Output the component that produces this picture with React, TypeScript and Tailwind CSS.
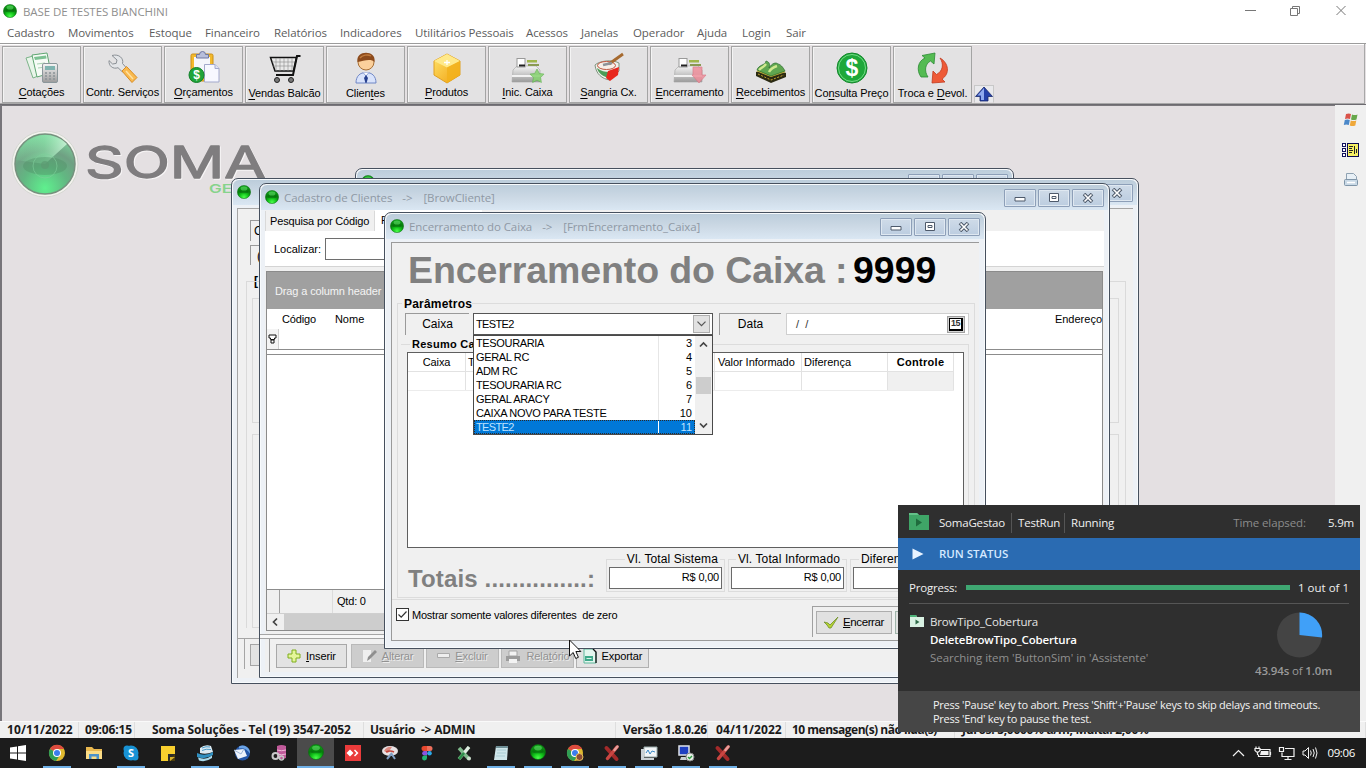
import type { ReactNode } from 'react';

const UI = "font-['Open_Sans','Noto_Sans',sans-serif]";
const ARIAL = "font-['Liberation_Sans',Arial,sans-serif]";

/* ---------- shared drawings ---------- */

function Defs() {
  return (
    <svg className="absolute h-0 w-0" aria-hidden="true">
      <defs>
        <radialGradient id="ball" cx="0.5" cy="0.9" r="0.9">
          <stop offset="0" stopColor="#4dff4d" />
          <stop offset="0.35" stopColor="#12c41a" />
          <stop offset="0.65" stopColor="#067a0c" />
          <stop offset="1" stopColor="#12a81c" />
        </radialGradient>
        <radialGradient id="logoBall" cx="0.5" cy="0.9" r="0.95">
          <stop offset="0" stopColor="#5ff08e" />
          <stop offset="0.4" stopColor="#62b782" />
          <stop offset="0.65" stopColor="#6fa083" />
          <stop offset="1" stopColor="#7fe0a2" />
        </radialGradient>
        <linearGradient id="shine" x1="0" y1="0" x2="1" y2="0">
          <stop offset="0" stopColor="#8df0ae" stopOpacity="0.1" />
          <stop offset="0.55" stopColor="#93efb2" stopOpacity="0.6" />
          <stop offset="1" stopColor="#d6f8e0" />
        </linearGradient>
        <linearGradient id="gold" x1="0" y1="0" x2="1" y2="1">
          <stop offset="0" stopColor="#ffe36a" />
          <stop offset="1" stopColor="#f0a010" />
        </linearGradient>
        <linearGradient id="silver" x1="0" y1="0" x2="0" y2="1">
          <stop offset="0" stopColor="#f6f6f6" />
          <stop offset="1" stopColor="#9b9b9b" />
        </linearGradient>
      </defs>
    </svg>
  );
}

function Ball({ size = 14 }: { size?: number }) {
  return (
    <svg width={size} height={size} viewBox="0 0 14 14" className="shrink-0">
      <circle cx="7" cy="7" r="6.6" fill="url(#ball)" stroke="#0a6b10" strokeWidth="0.5" />
      <ellipse cx="7" cy="3.600" rx="3.400" ry="2" fill="#7dff86" opacity="0.450" />
      <ellipse cx="7" cy="7" rx="4.6" ry="1.2" fill="#04500a" opacity="0.450" />
    </svg>
  );
}

function ToolIcon({ name }: { name: string }) {
  switch (name) {
    case 'cotacoes':
      return (
        <svg width="34" height="32" viewBox="0 0 34 32">
          <path d="M1 6 15 2l6 19-13 5Z" fill="#e9f5ea" stroke="#7db48a" />
          <path d="M7 3 22 1l4 20-14 4Z" fill="#f6fbf6" stroke="#5fa672" />
          <path d="M9 5 21 3.5l.6 3L10 8Z" fill="#7cc192" />
          <path d="M12 12l8-1M13 16l8-1" stroke="#a8d3b2" />
          <rect x="17.5" y="11.5" width="15" height="19" rx="1.5" fill="url(#silver)" stroke="#8b979b" />
          <rect x="20" y="14" width="10" height="4" fill="#7fb4b0" />
          <path d="M20 21h2m2 0h2m2 0h2M20 24h2m2 0h2m2 0h2M20 27h2m2 0h2m2 0h2" stroke="#8b9296" strokeWidth="1.4" />
        </svg>
      );
    case 'servicos':
      return (
        <svg width="32" height="32" viewBox="0 0 32 32">
          <path d="M5 3.5 10 8l-.8 3.4L5.6 12 2 8.6C1.500 14 6 17.500 11 15.700L15.500 20l4-4-4-4.500C17 6.500 12 1.500 5 3.500Z" fill="#e3e5e8" stroke="#8b9096" />
          <path d="m15 19 4.500-4.500L30 25.500 25 30.500Z" fill="#f9b94e" stroke="#d98d25" />
          <path d="m19 19 7 8" stroke="#ffe0a0" strokeWidth="1.500" />
        </svg>
      );
    case 'orcamentos':
      return (
        <svg width="32" height="33" viewBox="0 0 32 33">
          <rect x="3" y="3" width="22" height="27" rx="1.500" fill="#f3b92c" stroke="#c98f17" />
          <rect x="6" y="6" width="16" height="20" fill="#f5f6fb" />
          <path d="M8.500 7V3.500h3a3 3 0 0 1 6 0h3V7Z" fill="#b7bedb" stroke="#6f77a0" />
          <path d="M16.500 13.500H27l4 4V31H16.500Z" fill="#f7f8ff" stroke="#a3a9cc" />
          <path d="M27 13.500v4h4" fill="#dfe3f5" stroke="#a3a9cc" />
          <circle cx="8.500" cy="24" r="7.500" fill="#1fa53a" stroke="#0f7f28" />
          <text x="8.500" y="28.300" textAnchor="middle" fontSize="12" fontWeight="700" fill="#fff">$</text>
        </svg>
      );
    case 'vendas':
      return (
        <svg width="32" height="30" viewBox="0 0 32 30">
          <path d="M1.500 3.500h26l-3 13.500H6Z" fill="#e9e9e9" stroke="#111" strokeWidth="1.500" />
          <path d="M7 4v13M11 4v13M15 4v13M19 4v13M23 4v13M3 8h24M4 12h22" stroke="#8a8a8a" strokeWidth="0.600" />
          <path d="M31.500 2H28l-4 19H7" fill="none" stroke="#111" strokeWidth="2" />
          <circle cx="8" cy="26" r="2.500" fill="#777" stroke="#222" />
          <circle cx="22" cy="26" r="2.500" fill="#777" stroke="#222" />
        </svg>
      );
    case 'clientes':
      return (
        <svg width="24" height="32" viewBox="0 0 24 32">
          <path d="M2 31c0-7 4-10.500 10-10.500S22 24 22 31Z" fill="#d9e3fb" stroke="#6f86c5" />
          <path d="m9 20.500 3 3.500 3-3.500" fill="#fff" stroke="#8ea0d4" />
          <path d="m12 23 2 3-1.500 5h-1L10 26Z" fill="#27408f" />
          <circle cx="12" cy="10" r="8" fill="#fbd09c" stroke="#a86f35" />
          <path d="M3.500 10C2.500 3.500 7 .8 12 .8s9.500 2.700 8.500 9.200C17 6 9 9 3.500 10Z" fill="#8c4a1c" />
          <path d="M6 6c2-3 8-4 11-2" stroke="#c07a3c" strokeWidth="1.400" fill="none" />
        </svg>
      );
    case 'produtos':
      return (
        <svg width="28" height="31" viewBox="0 0 28 31">
          <path d="M14 1 27 8v14L14 30 1 22V8Z" fill="url(#gold)" stroke="#e0a021" />
          <path d="M14 1 27 8 14 14.500 1 8Z" fill="#ffe98a" />
          <path d="M14 14.500 27 8v14L14 30Z" fill="#f3b11c" opacity="0.800" />
          <path d="M14 7v5m-3-2.500h6" stroke="#fff" strokeWidth="1.300" />
        </svg>
      );
    case 'inic':
    case 'encerramento': {
      const red = name === 'encerramento';
      return (
        <svg width="34" height="27" viewBox="0 0 34 27">
          <path d="M2 13 6 9h19l4 4v12H1Z" fill="url(#silver)" stroke="#a3a3a3" strokeWidth="0.600" />
          <path d="M1 18h28v2H1Z" fill="#fff" opacity="0.800" />
          <rect x="6" y="1.500" width="8" height="8.500" fill="#fff" stroke="#999" />
          <path d="M8 8.500h6" stroke="#222" strokeWidth="2" />
          <rect x="16" y="3" width="10" height="2.500" fill="#9fb64a" />
          <rect x="17" y="7" width="11" height="2" fill="#8a9a52" />
          {red ? (
            <path d="M20 10h9v8h4l-7 8-7-8h1Z" fill="#ee8f9b" stroke="#d9707f" strokeWidth="0.700" opacity="0.850" />
          ) : (
            <path d="m26 12 2.300 4.500 4.700.6-3.400 3.400.8 5-4.400-2.300-4.400 2.300.8-5-3.400-3.400 4.700-.6Z" fill="#86d36f" stroke="#5cb04a" strokeWidth="0.700" opacity="0.850" />
          )}
        </svg>
      );
    }
    case 'sangria':
      return (
        <svg width="30" height="32" viewBox="0 0 30 32">
          <path d="M1 13c4-4 17-6 24-2v8l-9 9C8 27 2 22 1 13Z" fill="#eef0ea" stroke="#7f937f" />
          <path d="M3 16c4 3 8 4 12 4l1 6C9 25 4 21 3 16Z" fill="#4c9c57" />
          <path d="m14 19 11-4-1 8-8 6-4-3Z" fill="#e8261c" />
          <ellipse cx="12.500" cy="13.500" rx="9" ry="4" fill="#f7efe8" stroke="#c0563f" />
          <path d="M15 12 29 2" stroke="#a66a2f" strokeWidth="2.800" />
          <path d="m9 13 9-2" stroke="#8d9398" strokeWidth="2.600" />
        </svg>
      );
    case 'recebimentos':
      return (
        <svg width="32" height="26" viewBox="0 0 32 26">
          <path d="m1 14 14-4 16 5v4l-15 6L1 18Z" fill="#2b2a12" />
          <path d="m1 13 15 6 15-5-14-6Z" fill="#c9b53a" />
          <path d="M2 12c2-6 8-4 9-9 4 1 4 4 3 7 3-5 7-6 9-4 2 0 5 3 7 7l-14 5Z" fill="#5fa650" stroke="#2a6a2e" strokeWidth="0.700" />
          <path d="M4 12c3-3 5-3 7-6M14 14c2-4 5-5 8-6" stroke="#cfe88e" strokeWidth="2.400" fill="none" />
          <path d="m3 16 13 6 13-5" stroke="#c9a52e" strokeDasharray="2 1.500" fill="none" />
        </svg>
      );
    case 'consulta':
      return (
        <svg width="32" height="32" viewBox="0 0 32 32">
          <circle cx="16" cy="16" r="15" fill="#1ea83a" stroke="#12862a" />
          <circle cx="16" cy="16" r="13.500" fill="none" stroke="#7be08d" strokeWidth="0.900" />
          <text x="16" y="24" textAnchor="middle" fontSize="23" fontWeight="700" fill="#fff">$</text>
        </svg>
      );
    default:
      return (
        <svg width="32" height="32" viewBox="0 0 32 32">
          <path d="M4 25C-1 18 1 9 8 6L5 3.500 18 1l-1 11-3.500-3C8 12 7 19 11 25Z" fill="#54bb52" stroke="#2c8a35" strokeWidth="0.800" />
          <path d="M23 6c9 5 10 16 2 21l3 3-13 1 1-12 3.500 3.500C26 19 27 12 23 6Z" fill="#ee5a37" stroke="#c23a1e" strokeWidth="0.800" />
        </svg>
      );
  }
}

/* ---------- application chrome ---------- */

const MENU: [string, string][] = [
  ['Cadastro', 'w-[61px]'],
  ['Movimentos', 'w-[81px]'],
  ['Estoque', 'w-[56px]'],
  ['Financeiro', 'w-[69px]'],
  ['Relatórios', 'w-[66px]'],
  ['Indicadores', 'w-[75px]'],
  ['Utilitários Pessoais', 'w-[111px]'],
  ['Acessos', 'w-[55px]'],
  ['Janelas', 'w-[52px]'],
  ['Operador', 'w-[64px]'],
  ['Ajuda', 'w-[45px]'],
  ['Login', 'w-[44px]'],
  ['Sair', 'w-[40px]'],
];

const TOOLS: [string, string, string, string, boolean][] = [
  ['cotacoes', '', 'C', 'otações', false],
  ['servicos', 'Contr. Serviços', '', '', false],
  ['orcamentos', '', 'O', 'rçamentos', false],
  ['vendas', '', 'V', 'endas Balcão', true],
  ['clientes', 'Clien', 't', 'es', true],
  ['produtos', '', 'P', 'rodutos', false],
  ['inic', '', 'I', 'nic. Caixa', false],
  ['sangria', '', 'S', 'angria Cx.', false],
  ['encerramento', '', 'E', 'ncerramento', false],
  ['recebimentos', '', 'R', 'ecebimentos', false],
  ['consulta', 'Co', 'n', 'sulta Preço', true],
  ['troca', 'Troca e ', 'D', 'evol.', true],
];

function TitleBar() {
  return (
    <header className={`flex h-[22px] items-center bg-white pl-[3px] ${UI}`}>
      <Ball size={14} />
      <span className="ml-[6px] pt-px text-[11.5px] tracking-[-0.07px] whitespace-nowrap text-[#8f8f8f]">BASE DE TESTES BIANCHINI</span>
      <div className="ml-auto flex items-center pr-[18px]">
        <svg width="104" height="14" viewBox="0 0 104 14" fill="none" stroke="#777" strokeWidth="1">
          <path d="M1 6.500h11M46.500 4.500h7v7h-7ZM48.500 4.500v-2h7v7h-2M92.500 2l9 9M101.500 2l-9 9" />
        </svg>
      </div>
    </header>
  );
}

function MenuBar() {
  return (
    <nav className={`flex h-[21px] items-center bg-white pl-[7px] text-[11.5px] tracking-[-0.1px] text-[#5c5c5c] ${UI}`}>
      {MENU.map(([label, w]) => (
        <span key={label} className={`${w} shrink-0 whitespace-nowrap`}>{label}</span>
      ))}
    </nav>
  );
}

function Toolbar() {
  return (
    <div className={`flex h-[62px] border-t border-b border-t-[#9c9c9c] border-b-[#6c6a70] bg-[#e4e0e2] ${ARIAL}`}>
      <div className="mr-px flex h-[60px] flex-1 gap-[2px] border-r border-b border-r-[#a8a8a8] border-b-[#a8a8a8] pt-[2px] pl-[2px] shadow-[inset_0_1px_0_#fff]">
        {TOOLS.map(([icon, a, u, b, low]) => (
          <button key={icon} className="flex h-[57px] w-[79px] shrink-0 flex-col items-center border border-[#a4a4a4] bg-[#e3e2e3] shadow-[inset_1px_1px_0_#f4f4f4]">
            <span className="flex h-[39px] items-end justify-center"><span className="block pb-[2px]"><ToolIcon name={icon} /></span></span>
            <span className={`${low ? 'pt-px' : ''} text-[11px] leading-[13px] tracking-[-0.1px] whitespace-nowrap text-black`}>
              {a}<span className="underline underline-offset-[1.500px]">{u}</span>{b}
            </span>
          </button>
        ))}
        <div className="flex h-[18px] w-[20px] items-center justify-center self-end border border-t-[#c8c8c8] border-r-[#c8c8c8] border-b-[#e4e0e2] border-l-[#c8c8c8] bg-[#e9e9ec]">
          <svg width="18" height="16" viewBox="0 0 18 16">
            <path d="M9 1 17.500 10.500H13V15H5v-4.500H.5Z" fill="#2440a8" stroke="#1a2a6c" strokeWidth="0.800" />
            <path d="M9 2v12H6V9.500H2.500Z" fill="#8fa9ee" />
          </svg>
        </div>
      </div>
    </div>
  );
}

function SideBar() {
  return (
    <aside className="flex w-[31px] shrink-0 flex-col items-center gap-[14px] bg-[#f0f0f0] pt-[7px]">
      <svg width="16" height="16" viewBox="0 0 16 16">
        <path d="M3 2q3-1 5 0L7 7Q4.500 6 2 7Z" fill="#d9534a" />
        <path d="M9 2.500q3 1 5.500 0l-1 5q-3 1-5.500 0Z" fill="#67a84c" />
        <path d="M1.800 8q2.500-1 5 0l-1 5q-2.500-1-5 0Z" fill="#4b88c9" />
        <path d="M7.800 8.500q2.500 1 5.500 0l-1 5q-3 1-5.500 0Z" fill="#efa83a" />
      </svg>
      <svg width="17" height="16" viewBox="0 0 17 16" shapeRendering="crispEdges">
        <path d="M.5 1.500h3v3h-3ZM.5 6.500h3v3h-3ZM.5 11.500h3v3h-3Z" fill="#fff" stroke="#11115c" />
        <rect x="5.500" y="1.500" width="11" height="13" fill="#f5ef63" stroke="#0b0b50" />
        <path d="M7 4.500h4M7 6.500h3M7 8.500h4M7 10.500h3M12.500 4v8M14.500 7v4" stroke="#222" />
      </svg>
      <svg width="16" height="16" viewBox="0 0 16 16">
        <path d="M3.500 1.500h7l3 3v9h-10Z" fill="#e8f0f6" stroke="#8fa2b2" />
        <rect x="1.500" y="7.500" width="13" height="6" rx="1" fill="#c9d9e6" stroke="#7f95a8" />
        <path d="M4 10.500h8" stroke="#fff" strokeWidth="1.500" />
      </svg>
    </aside>
  );
}

function SomaLogo() {
  return (
    <svg width="270" height="80" viewBox="0 0 270 80" className="mt-[21px] ml-[10px]">
      <circle cx="35" cy="37" r="33" fill="#f3f3ee" stroke="#d5d8d2" />
      <circle cx="35" cy="37" r="30" fill="url(#logoBall)" stroke="#76917e" strokeWidth="1.500" />
      <path d="M35 37 57 17A30 30 0 0 0 6 33Z" fill="url(#shine)" opacity="0.800" />
      <ellipse cx="35" cy="39" rx="22" ry="9" fill="#4e8762" opacity="0.350" />
      <circle cx="35" cy="39" r="12" fill="none" stroke="#7fcf9b" opacity="0.600" />
      <circle cx="35" cy="38" r="4" fill="#5d9a72" opacity="0.700" />
      <text x="75" y="51" textLength="181" lengthAdjust="spacingAndGlyphs" fontSize="44" fontFamily="Inter, 'Liberation Sans', sans-serif" fontWeight="400" fill="#7f7d7f" stroke="#7f7d7f" strokeWidth="1.300" strokeLinejoin="round" className="drop-shadow-[1px_1px_0_#f7f5f6]">SOMA</text>
      <text x="199" y="66" textLength="23" lengthAdjust="spacingAndGlyphs" fontSize="12" fontFamily="Inter, 'Liberation Sans', sans-serif" fontWeight="600" fill="#86d38b">GE</text>
    </svg>
  );
}

/* ---------- MDI windows ---------- */

function CaptionButtons() {
  const box = 'flex h-[18px] w-[32px] items-center justify-center rounded-[1px] border border-[#8d9fb8] bg-gradient-to-b from-[#cfdbe8] to-[#bccde0] shadow-[inset_0_0_0_1px_#dfe8f1]';
  return (
    <div className="flex gap-[2px]">
      <span className={box}>
        <svg width="12" height="8" viewBox="0 0 12 8"><path d="M1 3.500h10v3.500H1Z" fill="#fff" stroke="#4e5a6b" /></svg>
      </span>
      <span className={box}>
        <svg width="12" height="10" viewBox="0 0 12 10"><path d="M1.500.5h9v8h-9Z" fill="#fff" stroke="#4e5a6b" /><path d="M4 3.500h4v2H4Z" fill="#fff" stroke="#4e5a6b" /></svg>
      </span>
      <span className={box}>
        <svg width="12" height="10" viewBox="0 0 12 10"><path d="m2 1 8 8M10 1 2 9" stroke="#4e5a6b" strokeWidth="3.600" /><path d="m2.500 1.500 7 7M9.500 1.500l-7 7" stroke="#fff" strokeWidth="1.600" /></svg>
      </span>
    </div>
  );
}

function MdiWindow({ place, title, target, children }: { place: string; title?: string; target?: string; children?: ReactNode }) {
  return (
    <section className={`absolute flex flex-col rounded-t-[7px] border border-[#46505e] bg-[#edf1f6] px-[5px] pb-[5px] shadow-[inset_0_0_0_1px_#f7fafc] ${place}`}>
      <div className="-mx-[4px] mt-px flex h-[25px] shrink-0 items-start rounded-t-[6px] bg-gradient-to-b from-[#bccddb] via-[#ccd9e5] to-[#dae7f3] pr-[4px] pl-[4px]">
        <div className="flex pt-[5px]"><Ball size={14} /></div>
        {title && (
          <span className={`ml-[5px] pt-[5px] text-[11.500px] leading-[16px] tracking-[-0.100px] whitespace-pre text-[#8f99a5] ${UI}`}>
            {title}<span className="ml-[10px]">-&gt;</span><span className="ml-[11px]">{target}</span>
          </span>
        )}
        <div className="ml-auto pt-[4px]"><CaptionButtons /></div>
      </div>
      {children}
    </section>
  );
}

function ClientesWindow() {
  const btn = 'flex h-[24px] items-center justify-center gap-[5px] border text-[11px] tracking-[-0.100px] whitespace-nowrap';
  const off = 'border-[#b9b9b9] bg-[#cdcdcd] text-[#929292] [text-shadow:1px_1px_0_#ececec]';
  return (
    <MdiWindow place="top-[78px] left-[259px] h-[495px] w-[851px]" title="Cadastro de Clientes" target="[BrowCliente]">
      <div className={`flex min-h-0 flex-1 flex-col bg-[#f0f0f0] text-[11px] text-black ${ARIAL}`}>
        <div className="flex h-[21px] items-end">
          <span className="flex h-[20px] w-[110px] items-center border-x border-[#d9d9d9] bg-[#f0f0f0] pl-[4px] tracking-[-0.15px] whitespace-nowrap">Pesquisa por Código</span>
          <span className="flex h-[21px] w-[107px] items-center bg-white pl-[6px]">P</span>
        </div>
        <div className="flex h-[36px] items-center border-b border-[#d4d4d4] bg-white pt-px pl-[9px]">
          <span className="w-[51px]">Localizar:</span>
          <span className="h-[22px] w-[300px] border border-[#6e6e6e] bg-white" />
        </div>
        <div className="mt-[4px] mr-px ml-px flex h-[360px] flex-col border border-[#8b8b8b] bg-white">
          <div className="flex h-[37px] items-center bg-[#a0a0a0] pt-px pl-[8px] tracking-[-0.130px] text-[#f4f4f4]">Drag a column header</div>
          <div className="flex h-[20px] items-center pt-px">
            <span className="w-[15px]" />
            <span className="w-[53px] tracking-[-0.150px]">Código</span>
            <span className="w-[721px]">Nome</span>
            <span>Endereço</span>
          </div>
          <div className="flex h-[21px] border-b border-[#8c8c8c]">
            <span className="flex w-[12px] items-center justify-center border-r border-[#d0d0d0] bg-[#f4f4f4]">
              <svg width="9" height="10" viewBox="0 0 9 10"><path d="M1 1h7v3H6.500v1.500h-4V4H1ZM3 6h3v3H3Z" fill="#fff" stroke="#111" /></svg>
            </span>
          </div>
          <div className="h-[5px] border-b border-[#8c8c8c]" />
          <div className="flex-1" />
          <div className="flex h-[24px] items-center border-t border-[#8c8c8c] bg-[#f0f0f0]">
            <span className="h-full w-[13px] border-r border-[#a0a0a0]" />
            <span className="ml-[52px] flex h-full w-[60px] items-center border-l border-[#dcdcdc] pl-[4px] tracking-[-0.200px]">Qtd: 0</span>
          </div>
          <div className="flex h-[17px] items-center border-t border-[#cfcfcf] bg-[#f0f0f0]">
            <svg width="17" height="12" viewBox="0 0 17 12"><path d="M10 2.500 6.500 6l3.500 3.500" fill="none" stroke="#444" strokeWidth="1.700" /></svg>
            <span className="h-full w-[500px] bg-[#cdcdcd]" />
          </div>
        </div>
        <div className="mx-[-5px] mt-[3px] h-[5px] border-y border-[#a5a5a5] bg-[#f7f7f7]" />
        <div className="ml-[4px] flex flex-1 items-start gap-[2px] border-l border-[#9a9a9a] pt-[5px] pl-[6px]">
          <span className={`${btn} mr-[2px] w-[71px] border-[#a8a8a8] bg-[#e3e3e3]`}>
            <svg width="14" height="14" viewBox="0 0 14 14"><path d="M5 1h4v4h4v4H9v4H5V9H1V5h4Z" fill="#e4f59a" stroke="#7fae1d" /></svg>
            <span><u>I</u>nserir</span>
          </span>
          <span className={`${btn} ${off} w-[73px]`}>
            <svg width="15" height="14" viewBox="0 0 15 14"><path d="M1 1h8v12H1Z" fill="#efefef" /><path d="m5 12 1-4 7-7 2 2-7 7Z" fill="#8f8f8f" /></svg>
            <span><u>A</u>lterar</span>
          </span>
          <span className={`${btn} ${off} w-[73px]`}>
            <svg width="13" height="6" viewBox="0 0 13 6"><path d="M.500.500h12v4H.500Z" fill="#eee" stroke="#aaa" /></svg>
            <span><u>E</u>xcluir</span>
          </span>
          <span className={`${btn} ${off} w-[73px]`}>
            <svg width="16" height="13" viewBox="0 0 16 13"><path d="M4 1h8v5H4Z" fill="#f3f3f3" stroke="#a5a5a5" /><path d="M1 6h14v5H1Z" fill="#9c9c9c" /><path d="M4 9h8v4H4Z" fill="#f3f3f3" /></svg>
            <span>Rela<u>t</u>ório</span>
          </span>
          <span className={`${btn} w-[73px] border-[#b0b0b0] bg-[#e3e3e3]`}>
            <svg width="14" height="16" viewBox="0 0 14 16"><path d="M1 1h9l3 3v11H1Z" fill="#e3f6ee" stroke="#5fb79b" /><path d="M2 8h8v5H2Z" fill="#3fa98a" /><path d="M3.500 10.500h5" stroke="#d8f3e8" /><path d="m10 1 3 3v11" fill="none" stroke="#111" strokeWidth="1.300" /></svg>
            <span>Exportar</span>
          </span>
        </div>
      </div>
    </MdiWindow>
  );
}

function BackWindow() {
  return (
    <MdiWindow place="top-[73px] left-[231px] h-[506px] w-[908px]">
      <div className={`mt-[3px] flex min-h-0 flex-1 flex-col border-t border-l border-[#a5a5a5] bg-[#f0f0f0] text-[12px] ${ARIAL}`}>
        <div className="mt-[11px] ml-[12px] h-[21px] w-[60px] border-t border-l border-[#9a9a9a] pl-[3px] leading-[20px]">C</div>
        <div className="mt-[4px] ml-[12px] h-[20px] w-[60px] border-t border-l border-[#9a9a9a] pl-[6px] leading-[20px]">(</div>
        <div className="mr-[7px] ml-[8px] mt-[7px] flex h-[356px] flex-col">
          <div className="flex items-center text-[12px] leading-[18px] font-bold"><span className="pl-[8px]">[</span></div>
          <div className="-mt-[9px] flex flex-1 flex-col gap-[11px] border-t border-r border-l border-[#dadada] pt-[16px] pr-[6px] pl-[5px]">
            <div className="h-[125px] shrink-0 border border-[#dadada]" />
            <div className="flex-1 border border-[#dadada]" />
          </div>
        </div>
        <div className="mt-[10px] border-t border-[#a5a5a5] pl-[6px]">
          <div className="h-[30px] border-l border-[#a5a5a5] p-[5px]"><div className="h-[22px] w-[60px] border border-[#a5a5a5] bg-[#e3e3e3]" /></div>
        </div>
      </div>
    </MdiWindow>
  );
}

const CAIXAS: [string, string][] = [
  ['TESOURARIA', '3'],
  ['GERAL RC', '4'],
  ['ADM RC', '5'],
  ['TESOURARIA RC', '6'],
  ['GERAL ARACY', '7'],
  ['CAIXA NOVO PARA TESTE', '10'],
  ['TESTE2', '11'],
];

function CaixaDropdown() {
  return (
    <div className={`absolute top-[122px] left-[88px] z-10 flex h-[100px] w-[240px] border border-[#4a4a4a] bg-white text-[11px] text-black ${ARIAL}`}>
      <ul className="flex-1">
        {CAIXAS.map(([name, n]) => {
          const on = name === 'TESTE2';
          return (
            <li key={name} className={`flex h-[14px] items-center leading-[14px] ${on ? 'bg-[#0078d7] tracking-[-0.650px] text-[#bfe2ff] outline outline-dotted -outline-offset-1 outline-[#2b2b2b]' : 'tracking-[-0.350px]'}`}>
              <span className={`h-full w-[185px] border-r pl-[2px] whitespace-nowrap ${on ? 'border-white' : 'border-[#e6e6e6]'}`}>{name}</span>
              <span className="flex-1 pr-[3px] text-right tracking-normal">{n}</span>
            </li>
          );
        })}
      </ul>
      <div className="flex w-[17px] flex-col items-center justify-between bg-[#f0f0f0] py-[4px]">
        <svg width="9" height="9" viewBox="0 0 9 9"><path d="m1 6.500 3.500-3.500L8 6.500" fill="none" stroke="#444" strokeWidth="1.700" /></svg>
        <span className="mt-[14px] h-[17px] w-[15px] bg-[#cdcdcd]" />
        <svg width="9" height="9" viewBox="0 0 9 9" className="mt-[14px]"><path d="m1 2.500 3.500 3.500L8 2.500" fill="none" stroke="#444" strokeWidth="1.700" /></svg>
      </div>
    </div>
  );
}

function TotalBox({ label, value, at }: { label: string; value: string; at: string }) {
  return (
    <div className="relative h-[33px] w-[119px] shrink-0 border border-[#dcdcdc] px-[2px] pt-[7px]">
      <span className={`absolute -top-[8px] bg-[#f0f0f0] px-[2px] text-[12px] leading-[15px] tracking-[0.120px] whitespace-nowrap ${at}`}>{label}</span>
      <div className="flex h-[22px] items-center justify-end border border-[#6a6a6a] bg-white pr-[2px] pb-px text-[11px] tracking-[-0.200px]">{value}</div>
    </div>
  );
}

function EncerramentoWindow() {
  const cell = 'flex h-full items-center border-r border-[#e2e2e2] whitespace-nowrap';
  const legend = 'absolute bg-[#f0f0f0] font-bold whitespace-nowrap';
  return (
    <MdiWindow place="top-[107px] left-[384px] h-[437px] w-[602px]" title="Encerramento do Caixa" target="[FrmEncerramento_Caixa]">
      <div className={`relative mt-[3px] mr-px mb-[2px] ml-px flex min-h-0 flex-1 flex-col border-t border-b border-l border-[#9a9a9a] bg-[#f0f0f0] text-[12px] text-black ${ARIAL}`}>
        <h1 className="flex h-[60px] items-start pt-[6px] pl-[16px] text-[37.500px] leading-[42px] font-bold whitespace-pre text-[#808080]">
          <span className="w-[445px] tracking-[-0.100px]">Encerramento do Caixa :</span>
          <span className="text-black">9999</span>
        </h1>
        <div className="relative ml-[5px] flex h-[295px] w-[578px] flex-col border border-[#dcdcdc] pt-[9px] pl-[7px]">
          <span className={`${legend} -top-[7px] left-[4px] pl-[2px] text-[12px] leading-[15px] tracking-[0.200px]`}>Parâmetros</span>
          <div className="flex h-[22px]">
            <span className="mr-[4px] flex w-[64px] items-center justify-center border-t border-l border-[#9a9a9a] pb-[2px]">Caixa</span>
            <span className="mr-[6px] flex w-[240px] items-center justify-between border border-[#555] bg-white pr-[2px] pl-[2px] text-[11px] tracking-[-0.650px]">
              TESTE2
              <span className="flex h-[18px] w-[17px] items-center justify-center border border-[#adadad] bg-[#e1e1e1]">
                <svg width="9" height="6" viewBox="0 0 9 6"><path d="m.500.700 4 4 4-4" fill="none" stroke="#555" strokeWidth="1.200" /></svg>
              </span>
            </span>
            <span className="mr-[5px] flex w-[62px] items-center justify-center border-t border-l border-[#9a9a9a] pb-[2px]">Data</span>
            <span className="flex w-[183px] items-center border border-[#cfcfcf] bg-white pr-[3px] pl-[9px] text-[11px] whitespace-pre text-[#333]">
              /  /
              <span className="ml-auto flex h-[17px] w-[18px] items-center justify-center border border-[#a0a0a0] bg-[#d6d6d6]">
                <span className="flex h-[13px] w-[14px] items-center justify-center border border-r-2 border-b-2 border-black bg-white text-[9px] leading-none font-bold tracking-[-0.500px]">15</span>
              </span>
            </span>
          </div>
          <div className="relative -ml-[4px] mt-[9px] h-[210px] w-[568px] border-t border-r border-[#dcdcdc] pt-[7px] pl-[6px]">
            <span className={`${legend} -top-[8px] left-[9px] pl-[2px] text-[11px] leading-[15px] tracking-[0.250px]`}>Resumo Ca</span>
            <div className="flex h-[196px] w-[557px] flex-col border border-[#5f5f5f] bg-white text-[11px]">
              <div className="flex h-[19px] w-[546px] border-b border-[#e2e2e2]">
                <span className={`${cell} w-[58px] justify-center tracking-[-0.100px]`}>Caixa</span>
                <span className={`${cell} w-[249px] pl-[2px]`}>T</span>
                <span className={`${cell} w-[87px] pl-[3px] tracking-[-0.050px]`}>Valor Informado</span>
                <span className={`${cell} w-[86px] pl-[2px]`}>Diferença</span>
                <span className={`${cell} flex-1 justify-center font-bold tracking-[0.300px]`}>Controle</span>
              </div>
              <div className="flex h-[19px] w-[546px] border-b border-[#ececec]">
                <span className={`${cell} w-[58px]`} />
                <span className={`${cell} w-[249px]`} />
                <span className={`${cell} w-[87px]`} />
                <span className={`${cell} w-[86px]`} />
                <span className={`${cell} flex-1 bg-[#f0f0f0]`} />
              </div>
            </div>
          </div>
          <div className="-mt-px flex">
            <span className="w-[201px] pt-[12px] pl-[3px] text-[24px] leading-[28px] font-bold tracking-[0.150px] whitespace-nowrap text-[#808080]">Totais ...............:</span>
            <div className="flex gap-[3px] pt-[6px]">
              <TotalBox label="Vl. Total Sistema" value="R$ 0,00" at="right-[4px]" />
              <TotalBox label="Vl. Total Informado" value="R$ 0,00" at="right-[4px]" />
              <TotalBox label="Diferença" value="" at="left-[8px]" />
            </div>
          </div>
        </div>
        <div className="mt-[1px] flex flex-1 items-start border-t border-[#dcdcdc] pl-[4px] text-[11px]">
          <span className="mt-[8px] flex h-[13px] w-[13px] items-center justify-center border border-[#333] bg-white">
            <svg width="11" height="9" viewBox="0 0 11 9"><path d="m1.500 4.500 2.700 2.700L9.500 1.500" fill="none" stroke="#333" strokeWidth="1.200" /></svg>
          </span>
          <span className="ml-[3px] mt-[7px] w-[400px] leading-[16px] tracking-[-0.230px] whitespace-pre">Mostrar somente valores diferentes  de zero</span>
          <span className="mt-[6px] flex h-[31px] flex-1 gap-[3px] border-t border-l border-[#a0a0a0] pt-[4px] pl-[3px]">
            <span className="flex h-[23px] w-[76px] items-center justify-center gap-[3px] border border-[#adadad] bg-[#e1e1e1] pr-px whitespace-nowrap">
              <svg width="17" height="13" viewBox="0 0 17 13"><path d="m1 6 4 1 2 2 8-8-7 11H6L4 9Z" fill="#b6d334" stroke="#6f8f2a" strokeWidth="0.800" /></svg>
              <span className="text-[11.500px] tracking-[-0.400px]"><u>E</u>ncerrar</span>
            </span>
            <span className="h-[23px] w-[60px] border border-[#a0b5aa] bg-[#e1e1e1]" />
          </span>
        </div>
      </div>
      <CaixaDropdown />
    </MdiWindow>
  );
}

/* ---------- test runner overlay ---------- */

function RunnerPanel() {
  return (
    <div className={`absolute top-[505px] left-[898px] z-30 flex h-[227px] w-[462px] flex-col bg-[#2f2f2f] text-[11.500px] text-[#efefef] ${UI}`}>
      <div className="flex h-[33px] items-center pt-[2px] pr-[6px] pl-[11px] tracking-[-0.200px]">
        <svg width="20" height="17" viewBox="0 0 20 17" className="mr-[10px] mb-[2px]"><path d="M0 0h8l2 2h10v15H0Z" fill="#3fa567" /><path d="M0 0h8l2 2H0Z" fill="#63c088" /><path d="m7 5.500 6 4-6 4Z" fill="#1f6b3d" /></svg>
        <span className="flex w-[72px] items-center">SomaGestao</span>
        <span className="mr-[6px] h-[20px] w-px bg-[#555]" />
        <span className="w-[46px] whitespace-nowrap">TestRun</span>
        <span className="mr-[6px] h-[20px] w-px bg-[#555]" />
        <span>Running</span>
        <span className="ml-auto mr-[22px] tracking-[-0.100px] text-[#8c8c8c]">Time elapsed:</span>
        <span>5.9m</span>
      </div>
      <div className="flex h-[32px] items-center bg-[#2a6bb2] pl-[14px]">
        <svg width="12" height="12" viewBox="0 0 12 12" className="mr-[15px]"><path d="M.500.500 11.500 6 .500 11.500Z" fill="#e8f3ff" /></svg>
        <span className="font-semibold tracking-[-0.050px] text-[#d6e9ff]">RUN STATUS</span>
      </div>
      <div className="mr-[11px] ml-[11px] flex h-[34px] items-center border-b border-[#565656] tracking-[-0.200px]">
        <span className="w-[57px] pt-[2px]">Progress:</span>
        <span className="mt-[2px] h-[5px] w-[324px] bg-[#3fa873]" />
        <span className="ml-auto pt-[2px] tracking-[0px] whitespace-nowrap">1 out of 1</span>
      </div>
      <div className="flex h-[87px] pl-[12px]">
        <svg width="14" height="12" viewBox="0 0 14 12" className="mt-[11px] mr-[6px]"><path d="M0 0h6l1 2h7v10H0Z" fill="#d9f2e3" /><path d="M0 0h6l1 2H0Z" fill="#4fb47a" /><path d="m5.500 4.500 4 2.500-4 2.500Z" fill="#2f6b48" /></svg>
        <div className="flex w-[324px] flex-col pt-[9px] leading-[18px] tracking-[-0.150px] whitespace-nowrap">
          <span className="text-[#e4e4e4]">BrowTipo_Cobertura</span>
          <span className="font-semibold tracking-[-0.150px] text-white">DeleteBrowTipo_Cobertura</span>
          <span className="tracking-[-0.040px] text-[#8f8f8f]">Searching item 'ButtonSim' in 'Assistente'</span>
        </div>
        <div className="flex w-[80px] flex-col items-center pt-[8px]">
          <svg width="46" height="46" viewBox="0 0 46 46" className="ml-[11px]"><circle cx="22.500" cy="23" r="22.500" fill="#444" /><path d="M22.500 23V.500A22.500 22.500 0 0 1 45 25.500Z" fill="#40a0f8" /></svg>
          <span className="mt-[4px] -ml-px tracking-[-0.150px] whitespace-nowrap text-[#9a9a9a]"><b className="font-semibold">43.94s</b> of <b className="font-semibold">1.0m</b></span>
        </div>
      </div>
      <div className="flex-1 bg-[#464646] pt-[7px] pl-[35px] text-[11px] leading-[14px] tracking-[-0.260px] whitespace-nowrap text-[#f2f2f2]">
        <p>Press 'Pause' key to abort. Press 'Shift'+'Pause' keys to skip delays and timeouts.</p>
        <p>Press 'End' key to pause the test.</p>
      </div>
    </div>
  );
}

/* ---------- status bar and taskbar ---------- */

const STATUS: [string, string][] = [
  ['10/11/2022', 'w-[79px] pl-[7px] tracking-[0.1px]'],
  ['09:06:15', 'w-[56px] pl-[6px]'],
  ['Soma Soluções - Tel (19) 3547-2052', 'w-[229px] pl-[17px]'],
  ['Usuário  -> ADMIN', 'w-[252px] pl-[6px] tracking-[-0.22px]'],
  ['Versão 1.8.0.26', 'w-[92px] pl-[7px] tracking-[-0.32px]'],
  ['04/11/2022', 'w-[78px] pl-[8px] tracking-[0.1px]'],
  ['10 mensagen(s) não lida(s)', 'w-[169px] pl-[6px] tracking-[-0.5px]'],
  ['Juros: 5,0000% a/m, Multa: 2,00%', 'flex-1 pl-[7px] tracking-[-0.3px]'],
];

function StatusBar() {
  return (
    <footer className={`flex h-[17px] items-center border-t border-[#fafafa] bg-[#f0f0f0] text-[12px] leading-[16px] font-bold tracking-[-0.130px] text-[#1a1a1a] ${UI}`}>
      {STATUS.map(([t, c]) => (
        <span key={t} className={`${c} shrink-0 border-r border-[#dedede] whitespace-pre`}>{t}</span>
      ))}
    </footer>
  );
}

function TaskIcon({ name }: { name: string }) {
  const s = { width: 18, height: 18, viewBox: '0 0 18 18' };
  switch (name) {
    case 'start':
      return <svg {...s}><path d="M1 3.500 8 2.500V8.500H1ZM9 2.300 17 1v7.500H9ZM1 9.500h7v6L1 14.500ZM9 9.500h8V17l-8-1.200Z" fill="#fff" /></svg>;
    case 'chrome':
    case 'chrome2':
      return (
        <svg {...s}>
          <circle cx="9" cy="9" r="8" fill="#e0b92f" />
          <path d="M9 9 2 5A8 8 0 0 1 16 5H9Z" fill="#dd4b3e" />
          <path d="M9 9 2 5a8 8 0 0 0 6 12l4-6Z" fill="#2f9e55" />
          <circle cx="9" cy="9" r="4" fill="#fff" />
          <circle cx="9" cy="9" r="3" fill="#3b7ded" />
          {name === 'chrome2' && <circle cx="13.500" cy="13" r="3.500" fill="#8a4b35" stroke="#e6c05a" />}
        </svg>
      );
    case 'folder':
      return <svg {...s}><path d="M1 3h6l2 2h8v10H1Z" fill="#e9b84f" /><path d="M1 7h16v8H1Z" fill="#fbdc86" /><path d="M4 10h10v5h-2.500v-2.500h-5V15H4Z" fill="#4d92c9" /></svg>;
    case 'skype':
      return <svg {...s}><circle cx="9" cy="9" r="7.500" fill="#1892d4" /><circle cx="5" cy="5" r="3.500" fill="#1892d4" /><circle cx="13" cy="13" r="3.500" fill="#1892d4" /><text x="9" y="13" textAnchor="middle" fontSize="11" fontWeight="700" fill="#fff">S</text></svg>;
    case 'notes':
      return <svg {...s}><path d="M2 2h14v15H2Z" fill="#f8cf2e" /><path d="M9 10h7v7H9Z" fill="#4a3c0c" /><path d="M9 17v-7h7Z" fill="#2b2b2b" /><path d="m11 13 5 0-5 4Z" fill="#d6b02a" /></svg>;
    case 'books':
      return <svg {...s}><path d="M4 4q5-4 11-2l2 6q-7 3-13 1Z" fill="#dcebf3" /><path d="M6 4q4-2 8-1M6 6.500q4-2 9-1" stroke="#4e9cc8" fill="none" /><path d="M1 9q8 4 16-1v3q-8 5-16 2Z" fill="#2f8fc0" /><path d="M2 13.500q8 3 14-2v2.500q-7 5-13 2.500Z" fill="#a9daec" /></svg>;
    case 'mail':
      return <svg {...s}><circle cx="9.500" cy="9" r="7.500" fill="#2456a8" /><path d="M6 2.500a7.500 7.500 0 0 1 11 7q-4-6-11-5Z" fill="#6ba4e6" /><path d="m1 6 10-1 3 7-9 3Z" fill="#eef3fb" /><path d="m1 6 7 4 3-5" fill="none" stroke="#9bb4d8" /></svg>;
    case 'db':
      return <svg {...s}><path d="M7 2q4.500-2 9 0v12q-4.500 2-9 0Z" fill="#c05a9a" /><path d="M7 6q4.500 1.500 9 0M7 10q4.500 1.500 9 0" stroke="#f0b8d8" fill="none" /><circle cx="5.500" cy="12" r="3" fill="none" stroke="#c8c8c8" strokeWidth="2" /><circle cx="11.500" cy="14" r="2" fill="none" stroke="#c8c8c8" strokeWidth="1.500" /></svg>;
    case 'anydesk':
      return <svg {...s}><path d="M1 1h16v16H1Z" fill="#ea3b3b" /><path d="m6 5.500 3.500 3.500L6 12.500 2.500 9ZM11 5.500l3.500 3.500-3.500 3.500-1-1L12.300 9 10 6.500Z" fill="#fff" /></svg>;
    case 'snip':
      return <svg {...s}><ellipse cx="9" cy="7" rx="8" ry="5" fill="#e8e2e4" /><path d="M3 7q3-5 8-4l-4 6Z" fill="#d98a80" /><path d="M5 8q4-2 8 0" stroke="#c0443c" strokeWidth="1.500" fill="none" /><path d="m10 9 4 6M11 9l-5 6" stroke="#7f9fc4" strokeWidth="2" /></svg>;
    case 'figma':
      return <svg {...s}><path d="M6 2h3v5H6a2.500 2.500 0 0 1 0-5Z" fill="#e8482e" /><path d="M9 2h3a2.500 2.500 0 0 1 0 5H9Z" fill="#ee6f5c" /><path d="M6 7h3v4.500H6A2.300 2.300 0 0 1 6 7Z" fill="#8b55e0" /><circle cx="11.500" cy="9.300" r="2.300" fill="#2aa8e8" /><path d="M6 11.500h3V14a2.500 2.500 0 1 1-3-2.500Z" fill="#23b574" /></svg>;
    case 'tools':
      return <svg {...s}><path d="m4 4 10 11M14 3 4 15" stroke="#7fb98c" strokeWidth="3.500" /><path d="M14 3 9.500 8.500" stroke="#e3ece4" strokeWidth="3" /><path d="m9 9-5 6" stroke="#2d8f4a" strokeWidth="2.500" /><circle cx="14" cy="14.500" r="2" fill="#cfe3d0" /></svg>;
    case 'notepad':
      return <svg {...s}><path d="M4 2h12l-1 14H2Z" fill="#cfe6ea" /><path d="M4 2h12v2H4Z" fill="#6f8f96" /><path d="M5 6h9M5 9h9M4 12h9" stroke="#a9ccd3" /></svg>;
    case 'soma':
      return <Ball size={16} />;
    case 'redx':
      return <svg {...s}><path d="m3.500 4 10 11" stroke="#a32a2a" strokeWidth="4" strokeLinecap="round" /><path d="M14 3 4.500 14.500" stroke="#c94642" strokeWidth="3.500" strokeLinecap="round" /><path d="m14.500 2.500-3 3.500" stroke="#e8a09c" strokeWidth="2.500" strokeLinecap="round" /></svg>;
    case 'monitor':
      return <svg {...s}><path d="M4 3h13v10H4Z" fill="#f2f5f7" stroke="#9aa" /><path d="m6 9 2-3 2 4 2-3 3 1" stroke="#3a88c4" fill="none" /><path d="M1 5h3v9h10v2H1Z" fill="#c9d0d4" /></svg>;
    default:
      return <svg {...s}><path d="M2 2h10v9H2Z" fill="#1f3fc0" stroke="#dfe3ea" strokeWidth="1.500" /><path d="M4 13h7v3H3Z" fill="#c9d0d4" /><circle cx="13" cy="13" r="4" fill="#e8f0e8" stroke="#888" /><path d="m11 13 1.500 1.500L15 12" stroke="#2d9a3f" strokeWidth="1.400" fill="none" /></svg>;
  }
}

const TASKS: [string, boolean][] = [
  ['chrome', true], ['folder', false], ['skype', true], ['notes', false], ['books', true], ['mail', false],
  ['db', false], ['soma', true], ['anydesk', false], ['snip', false], ['figma', false], ['tools', false],
  ['notepad', true], ['soma', true], ['chrome2', true], ['redx', true], ['monitor', true], ['pc', true], ['redx', true],
];

function TaskBar() {
  return (
    <footer className="flex h-[30px] bg-[#1c1c1c]">
      <div className="flex w-[38px] items-center pl-[9px]"><TaskIcon name="start" /></div>
      {TASKS.map(([name, open], i) => (
        <div key={i} className={`flex w-[37px] shrink-0 flex-col items-center pt-[6px] ${i === 7 ? 'bg-[#4b4b4b]' : ''}`}>
          <TaskIcon name={name} />
          <span className={`mt-auto h-[2px] ${i === 7 ? 'w-full' : 'w-[28px]'} ${open ? 'bg-[#6fb0e6]' : ''}`} />
        </div>
      ))}
      <div className="ml-auto flex items-center pr-[11px]">
        <svg width="88" height="18" viewBox="0 0 88 18" fill="none" stroke="#f2f2f2" strokeWidth="1.200">
          <path d="m1 12 5.500-5.500L12 12" />
          <path d="M28 5.500h10v7H26.500v-2M38.500 8v3" />
          <path d="M29 7h7.500v4H28Z" fill="#f2f2f2" stroke="none" />
          <path d="M23 4.500h5v2L26.500 8h-2L23 6.500ZM24 4.500v-2M27 4.500v-2M25.500 8v3" />
          <path d="M53 4.500h9v8H50v-4M56 12.500V15M52.500 15.500h7M47.500 3.500h4v4h-4Z" />
          <path d="M71 7h2l3.500-3.500v11L73 11h-2ZM78.500 6.500q1.500 2.500 0 5M81 5q2.500 4 0 8M83.500 3.500q3 5.500 0 11" strokeWidth="1" />
        </svg>
        <span className={`ml-[7px] text-[11.500px] tracking-[-0.350px] text-white ${UI}`}>09:06</span>
      </div>
    </footer>
  );
}

export default function App() {
  return (
    <div className="relative flex h-[768px] w-[1366px] flex-col overflow-hidden bg-white">
      <Defs />
      <TitleBar />
      <MenuBar />
      <Toolbar />
      <main className="flex h-[616px]">
        <div className="relative flex-1 overflow-hidden border-t border-t-[#7a787c] bg-[#e4e0e2] shadow-[inset_2px_0_0_#77757a]">
          <SomaLogo />
          <div className="absolute inset-x-0 -top-px h-[616px]">
            <MdiWindow place="top-[63px] left-[355px] h-[300px] w-[659px]" />
            <BackWindow />
            <ClientesWindow />
            <EncerramentoWindow />
          </div>
        </div>
        <SideBar />
      </main>
      <StatusBar />
      <TaskBar />
      <RunnerPanel />
      <svg width="14" height="21" viewBox="0 0 14 21" className="absolute top-[639px] left-[568px] z-40">
        <path d="M1.500 1v16l3.700-3.500 2.500 6 2.700-1.200-2.500-5.800h5Z" fill="#fff" stroke="#111" />
      </svg>
    </div>
  );
}
